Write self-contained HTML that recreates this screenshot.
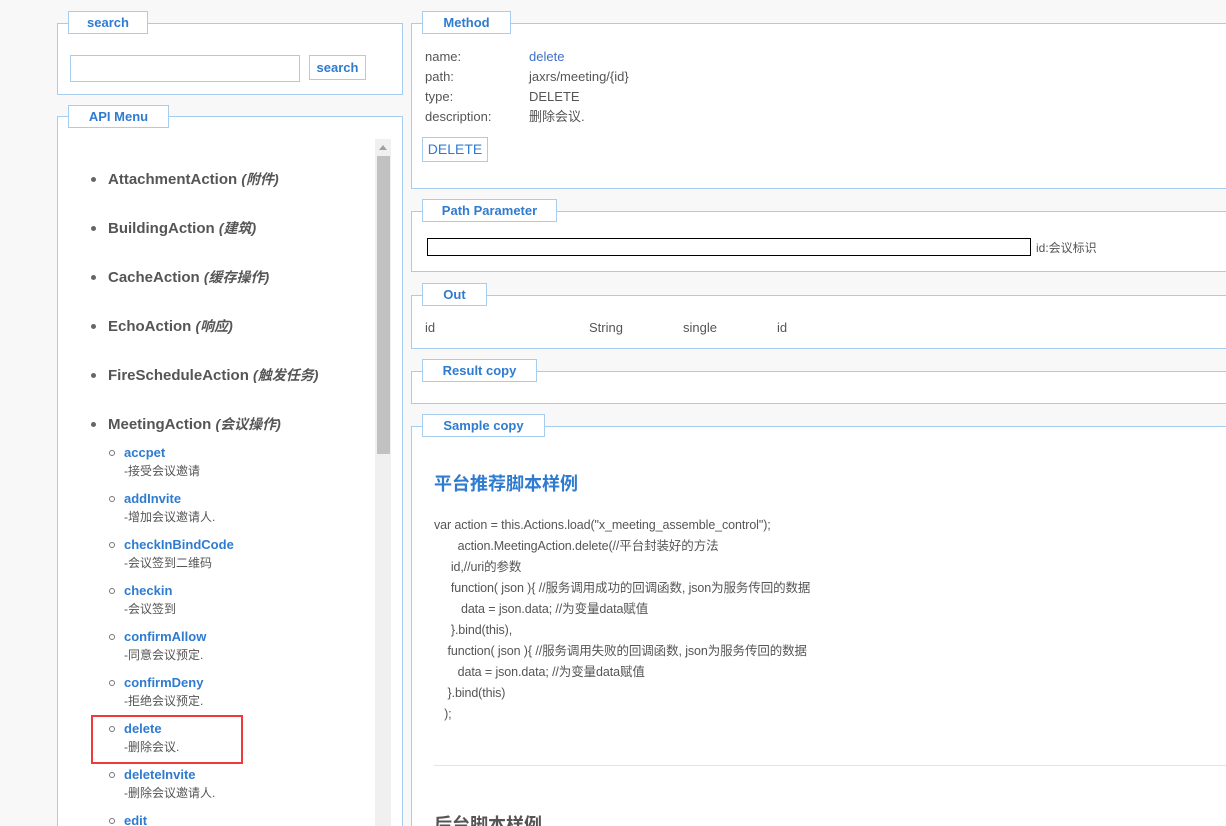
<!DOCTYPE html>
<html><head><meta charset="utf-8"><style>
*{margin:0;padding:0;box-sizing:border-box}
html,body{width:1226px;height:826px;overflow:hidden}
body{background:#f8f8f8;position:relative;font-family:"Liberation Sans","Noto Sans CJK SC",sans-serif;color:#555;font-size:13px}
.a{position:absolute;white-space:nowrap}
.p{position:absolute;background:#fff;border:1px solid #a6cdef}
.lg{position:absolute;background:#fff;border:1px solid #a6cdef;color:#2f7bd0;font-weight:bold;font-size:13px;text-align:center;line-height:21px;height:23px}
.it{position:absolute;left:108px;font-size:15px;font-weight:bold;color:#555}
.it i{font-weight:bold;font-size:14px}
.dot{position:absolute;left:91px;width:5px;height:5px;border-radius:50%;background:#666}
.sn{position:absolute;left:124px;font-size:13px;font-weight:bold;color:#2f7bd0}
.sd{position:absolute;left:124px;font-size:12px;color:#555}
.c{position:absolute;left:109px;width:6px;height:6px;border-radius:50%;border:1px solid #777}
.code{position:absolute;font-size:12.5px;color:#555;white-space:pre;letter-spacing:-0.1px}
</style></head><body>
<div class="p" style="left:57px;top:23px;width:346px;height:72px"></div>
<div class="lg" style="left:68px;top:11px;width:80px">search</div>
<div class="a" style="left:70px;top:55px;width:230px;height:27px;border:1px solid #a6cdef;background:#fff"></div>
<div class="a" style="left:309px;top:55px;width:57px;height:25px;border:1px solid #a6cdef;background:#fff;color:#2f7bd0;font-weight:bold;text-align:center;line-height:23px">search</div>

<div class="p" style="left:57px;top:116px;width:346px;height:720px"></div>
<div class="lg" style="left:68px;top:105px;width:101px">API Menu</div>
<div class="a" style="left:375px;top:139px;width:16px;height:690px;background:#f0f0f0"></div>
<div class="a" style="left:379px;top:145px;width:0;height:0;border-left:4px solid transparent;border-right:4px solid transparent;border-bottom:5px solid #a0a0a0"></div>
<div class="a" style="left:377px;top:156px;width:13px;height:298px;background:#c1c1c1"></div>

<div class="dot" style="top:177px"></div><div class="it" style="top:169px">AttachmentAction <i>(附件)</i></div>
<div class="dot" style="top:226px"></div><div class="it" style="top:218px">BuildingAction <i>(建筑)</i></div>
<div class="dot" style="top:275px"></div><div class="it" style="top:267px">CacheAction <i>(缓存操作)</i></div>
<div class="dot" style="top:324px"></div><div class="it" style="top:316px">EchoAction <i>(响应)</i></div>
<div class="dot" style="top:373px"></div><div class="it" style="top:365px">FireScheduleAction <i>(触发任务)</i></div>
<div class="dot" style="top:422px"></div><div class="it" style="top:414px">MeetingAction <i>(会议操作)</i></div>

<div class="c" style="top:450px"></div><div class="sn" style="top:445px">accpet</div><div class="sd" style="top:462px">-接受会议邀请</div>
<div class="c" style="top:496px"></div><div class="sn" style="top:491px">addInvite</div><div class="sd" style="top:508px">-增加会议邀请人.</div>
<div class="c" style="top:542px"></div><div class="sn" style="top:537px">checkInBindCode</div><div class="sd" style="top:554px">-会议签到二维码</div>
<div class="c" style="top:588px"></div><div class="sn" style="top:583px">checkin</div><div class="sd" style="top:600px">-会议签到</div>
<div class="c" style="top:634px"></div><div class="sn" style="top:629px">confirmAllow</div><div class="sd" style="top:646px">-同意会议预定.</div>
<div class="c" style="top:680px"></div><div class="sn" style="top:675px">confirmDeny</div><div class="sd" style="top:692px">-拒绝会议预定.</div>
<div class="c" style="top:726px"></div><div class="sn" style="top:721px">delete</div><div class="sd" style="top:738px">-删除会议.</div>
<div class="c" style="top:772px"></div><div class="sn" style="top:767px">deleteInvite</div><div class="sd" style="top:784px">-删除会议邀请人.</div>
<div class="c" style="top:818px"></div><div class="sn" style="top:813px">edit</div>
<div class="a" style="left:91px;top:715px;width:152px;height:49px;border:2px solid #f03a3a"></div>

<div class="p" style="left:411px;top:23px;width:830px;height:166px"></div>
<div class="lg" style="left:422px;top:11px;width:89px">Method</div>
<div class="a" style="left:425px;top:47px;line-height:20px">name:<br>path:<br>type:<br>description:</div>
<div class="a" style="left:529px;top:47px;line-height:20px"><span style="color:#3f6fc8">delete</span><br>jaxrs/meeting/{id}<br>DELETE<br>删除会议.</div>
<div class="a" style="left:422px;top:137px;width:66px;height:25px;border:1px solid #a6cdef;color:#2f7bd0;font-size:14px;text-align:center;line-height:23px">DELETE</div>

<div class="p" style="left:411px;top:211px;width:830px;height:61px"></div>
<div class="lg" style="left:422px;top:199px;width:135px">Path Parameter</div>
<div class="a" style="left:427px;top:238px;width:604px;height:18px;border:1px solid #000;background:#fff"></div>
<div class="a" style="left:1036px;top:239px;font-size:12px">id:会议标识</div>

<div class="p" style="left:411px;top:295px;width:830px;height:54px"></div>
<div class="lg" style="left:422px;top:283px;width:65px">Out</div>
<div class="a" style="left:425px;top:320px">id</div>
<div class="a" style="left:589px;top:320px">String</div>
<div class="a" style="left:683px;top:320px">single</div>
<div class="a" style="left:777px;top:320px">id</div>

<div class="p" style="left:411px;top:371px;width:830px;height:33px"></div>
<div class="lg" style="left:422px;top:359px;width:115px">Result copy</div>

<div class="p" style="left:411px;top:426px;width:830px;height:420px"></div>
<div class="lg" style="left:422px;top:414px;width:123px">Sample copy</div>
<div class="a" style="left:434px;top:470px;font-size:18px;font-weight:bold;color:#2f7bd0">平台推荐脚本样例</div>
<div class="code" style="left:434px;top:515px;line-height:21px">var action = this.Actions.load("x_meeting_assemble_control");
       action.MeetingAction.delete(//平台封装好的方法
     id,//uri的参数
     function( json ){ //服务调用成功的回调函数, json为服务传回的数据
        data = json.data; //为变量data赋值
     }.bind(this),
    function( json ){ //服务调用失败的回调函数, json为服务传回的数据
       data = json.data; //为变量data赋值
    }.bind(this)
   );</div>
<div class="a" style="left:434px;top:765px;width:800px;height:1px;background:#e4e4e4"></div>
<div class="a" style="left:434px;top:811px;font-size:18px;font-weight:bold;color:#555">后台脚本样例</div>
</body></html>
